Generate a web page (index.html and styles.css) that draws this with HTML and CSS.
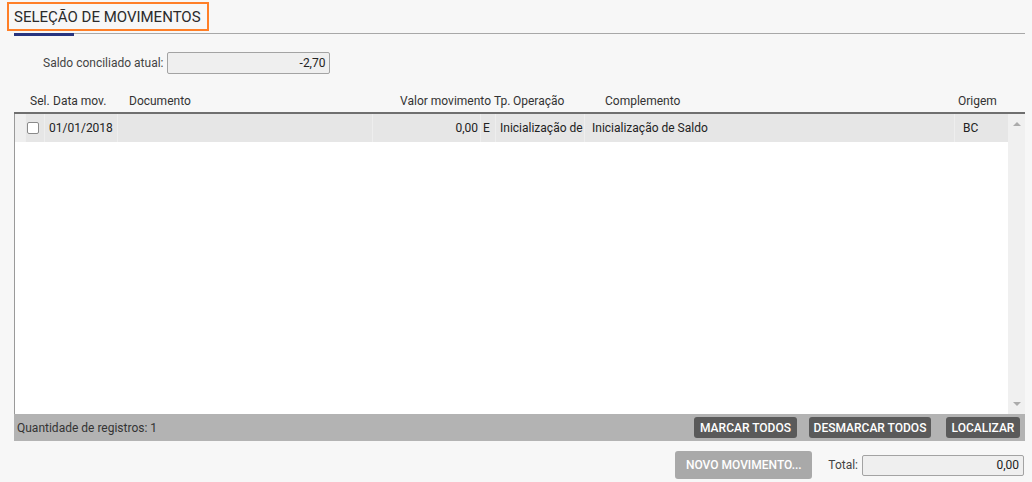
FILE: index.html
```html
<!DOCTYPE html>
<html lang="pt-BR">
<head>
    <meta charset="UTF-8">
    <meta name="viewport" content="width=device-width, initial-scale=1.0">
    <title>Seleção de movimentos</title>
    <link rel="stylesheet" href="styles.css">
</head>
<body>
    <div class="page">
        <!-- Abas -->
        <div class="tabs">
            <div class="tab active">SELEÇÃO DE MOVIMENTOS</div>
        </div>
        <div class="highlight"></div>

        <div class="saldo-row">
            <span class="label">Saldo conciliado atual:</span>
            <div class="field saldo">-2,70</div>
        </div>

        <!-- Grade de movimentos -->
        <div class="grid">
            <div class="grid-head">
                <div class="hc c-sel">Sel.</div>
                <div class="hc">Data mov.</div>
                <div class="hc">Documento</div>
                <div class="hc right">Valor movimento</div>
                <div class="hc">Tp.</div>
                <div class="hc">Operação</div>
                <div class="hc">Complemento</div>
                <div class="hc">Origem</div>
            </div>
            <div class="grid-body">
                <div class="rows">
                    <div class="row">
                        <div class="cell c-first"></div>
                        <div class="cell c-check"><span class="checkbox"></span></div>
                        <div class="cell c-data">01/01/2018</div>
                        <div class="cell c-doc"></div>
                        <div class="cell c-valor">0,00</div>
                        <div class="cell c-tp">E</div>
                        <div class="cell c-op">Inicialização de</div>
                        <div class="cell c-comp">Inicialização de Saldo</div>
                        <div class="cell c-orig">BC</div>
                    </div>
                </div>
                <div class="scrollbar">
                    <span class="arrow up"></span>
                    <span class="arrow down"></span>
                </div>
            </div>
            <div class="grid-foot">
                <span class="count">Quantidade de registros: 1</span>
                <div class="actions">
                    <button class="btn dark b-marcar">MARCAR TODOS</button>
                    <button class="btn dark b-desmarcar">DESMARCAR TODOS</button>
                    <button class="btn dark b-localizar">LOCALIZAR</button>
                </div>
            </div>
        </div>

        <div class="bottom-row">
            <button class="btn light b-novo">NOVO MOVIMENTO...</button>
            <span class="label total-label">Total:</span>
            <div class="field total">0,00</div>
        </div>
    </div>
</body>
</html>
```

FILE: styles.css
```css
body {
    margin: 0;
    background-color: #f7f7f7;
    font-family: Roboto, "Liberation Sans", sans-serif;
    font-size: 12px;
    color: #333;
    overflow: hidden;
}
.page {
    position: relative;
    padding: 0 7px 0 14px;
}

/* Abas */
.tabs {
    display: flex;
    height: 33px;
    border-bottom: 1px solid #a8a8a8;
}
.tab {
    position: relative;
    padding-top: 8px;
    font-size: 15px;
    color: #2b2b2b;
}
.tab.active::after {
    content: "";
    position: absolute;
    left: 0;
    bottom: -3px;
    width: 60px;
    height: 3px;
    background-color: #27347f;
}
.highlight {
    position: absolute;
    left: 7px;
    top: 2px;
    width: 198px;
    height: 25px;
    border: 2px solid #ff7f27;
}

/* Saldo */
.saldo-row {
    display: flex;
    align-items: center;
    margin-top: 18px;
    margin-left: 29px;
}
.label {
    color: #444;
}
.field {
    box-sizing: border-box;
    height: 22px;
    line-height: 20px;
    padding-right: 4px;
    text-align: right;
    background-color: #efefef;
    border: 1px solid #a3a3a3;
    border-radius: 2px;
    color: #222;
}
.saldo {
    width: 163px;
    margin-left: 4px;
}

/* Grade */
.grid {
    margin-top: 16px;
}
.grid-head {
    display: grid;
    grid-template-columns: 37px 76px 271px 94px 19px 92px 353px 1fr;
    height: 22px;
    align-items: center;
    border-bottom: 2px solid #6f6f6f;
}
.hc {
    padding-left: 2px;
    white-space: nowrap;
}
.hc.c-sel {
    padding-left: 16px;
}
.hc.right {
    text-align: right;
    padding-left: 0;
    padding-right: 1px;
}
.grid-body {
    display: flex;
    height: 300px;
    background-color: #fff;
    border-left: 1px solid #9a9a9a;
}
.rows {
    flex: 1;
}
.row {
    display: grid;
    grid-template-columns: 11px 19px 73px 255px 108px 15px 89px 370px 1fr;
    height: 28px;
    align-items: stretch;
    background-color: #e6e6e6;
}
.cell {
    display: flex;
    align-items: center;
    white-space: nowrap;
    border-right: 1px solid #eeeeee;
    color: #222;
}
.c-first {
    background-color: #efefef;
}
.c-check {
    padding-left: 1px;
}
.checkbox {
    box-sizing: border-box;
    width: 12px;
    height: 12px;
    background-color: #fff;
    border: 1px solid #8a8a8a;
    border-radius: 2px;
}
.c-data {
    padding-left: 4px;
}
.c-valor {
    justify-content: flex-end;
    padding-right: 2px;
}
.c-tp {
    padding-left: 2px;
}
.c-op {
    padding-left: 4px;
}
.c-comp {
    padding-left: 7px;
}
.c-orig {
    padding-left: 8px;
    border-right: none;
}
.scrollbar {
    position: relative;
    width: 17px;
    background-color: #f0f0f0;
}
.arrow {
    position: absolute;
    left: 5px;
    width: 0;
    height: 0;
    border-left: 4px solid transparent;
    border-right: 4px solid transparent;
}
.arrow.up {
    top: 8px;
    border-bottom: 4px solid #ababab;
}
.arrow.down {
    bottom: 8px;
    border-top: 4px solid #ababab;
}
.grid-foot {
    display: flex;
    align-items: center;
    justify-content: space-between;
    height: 27px;
    padding: 0 5px 0 3px;
    background-color: #b3b3b3;
}
.count {
    color: #333;
}
.actions {
    display: flex;
    align-items: center;
}

/* Botões */
.btn {
    border: none;
    border-radius: 3px;
    font-family: Roboto, "Liberation Sans", sans-serif;
    font-size: 12px;
    font-weight: 500;
    color: #fff;
    cursor: pointer;
    padding: 0;
}
.btn.dark {
    height: 21px;
    background-color: #5a5a5a;
}
.b-marcar {
    width: 103px;
}
.b-desmarcar {
    width: 122px;
    margin-left: 12px;
}
.b-localizar {
    width: 74px;
    margin-left: 15px;
}
.btn.light {
    height: 28px;
    width: 137px;
    background-color: #a9a9a9;
}
.bottom-row {
    display: flex;
    align-items: center;
    justify-content: flex-end;
    margin-top: 10px;
}
.total-label {
    margin-left: 16px;
}
.total {
    width: 162px;
    height: 21px;
    line-height: 19px;
    margin-left: 4px;
    margin-right: 1px;
}
```
